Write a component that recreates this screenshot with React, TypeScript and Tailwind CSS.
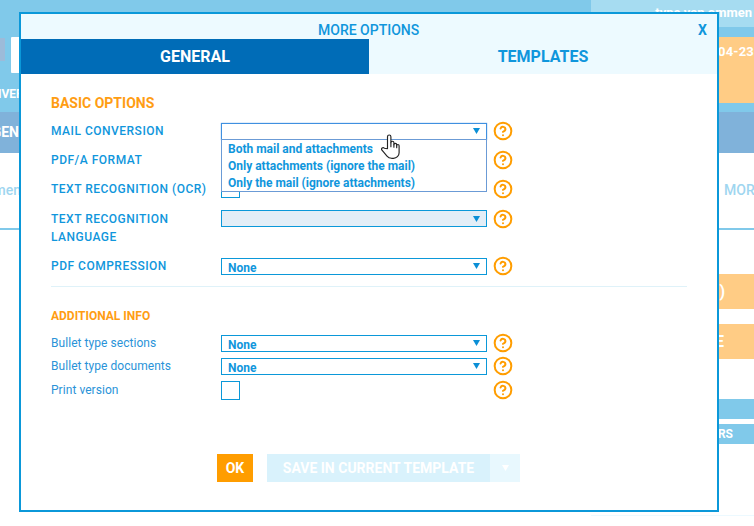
import { CircleHelp } from "lucide-react";

const text = "text-[#1096dc]";

function Arrow({ color = "#0b8fd6" }: { color?: string }) {
  return (
    <svg width="7" height="6" viewBox="0 0 7 6" className="shrink-0">
      <polygon points="0,0 7,0 3.5,6" fill={color} />
    </svg>
  );
}

function Help() {
  return <CircleHelp size={20} strokeWidth={2.4} color="#ff9d00" className="-my-[1px] ml-[6px] shrink-0" />;
}

function Hand() {
  return (
    <svg width="19" height="25" viewBox="0 -0.7 19 25" className="absolute left-[330px] top-[12px] z-20" fill="#ffffff" stroke="#222222" strokeWidth="1.15" strokeLinejoin="round" strokeLinecap="round">
      <path d="M6.5 14 V2 a1.7 1.7 0 0 1 3.4 0 V8 a1.5 1.5 0 0 1 3 0 v2 a1.4 1.4 0 0 1 2.8 0 v1 a1.2 1.2 0 0 1 2.4 0 V18 a5.6 5.6 0 0 1 -5.6 5.6 h-2 a6 6 0 0 1 -4.5 -2.2 L1 15.5 a1.5 1.5 0 0 1 2.3 -2 Z" />
      <path d="M9.9 8 V12 M12.9 10 V12.5 M15.7 11 V13" fill="none" />
    </svg>
  );
}

function Select({ value = "", className = "bg-white", border = "border-[#0b98d9]" }: { value?: string; className?: string; border?: string }) {
  return (
    <div className={`flex h-[17px] w-[266px] items-center justify-between border px-[6px] text-[12px] font-bold leading-none ${text} ${className} ${border}`}>
      <span className="pt-[3px]">{value}</span>
      <Arrow />
    </div>
  );
}

function Label({ children, upper = true }: { children: React.ReactNode; upper?: boolean }) {
  return (
    <div className={`w-[170px] shrink-0 text-[12px] leading-[18px] ${upper ? "font-medium tracking-[0.5px] text-[#1096dc]" : "font-normal tracking-[0.05px] text-[#2a93d8]"}`}>
      {children}
    </div>
  );
}

function Checkbox() {
  return <div className="h-[19px] w-[19px] border border-[#0b98d9] bg-white" />;
}

function LeftBackground() {
  return (
    <div className="flex w-[100px] shrink-0 flex-col text-white">
      <div className="flex h-[112px] flex-col bg-[#80c9ea]">
        <div className="mt-[37px] flex h-[36px] items-start gap-[6px]">
          <div className="mt-[1px] h-[23px] w-[5px] bg-[#9cbbd9]" />
          <div className="h-[36px] w-[20px] rounded-[1px] bg-white" />
        </div>
        <div className="-ml-[2px] mt-[13px] text-[12px] font-bold leading-[16px]">IVERT</div>
      </div>
      <div className="flex h-[41px] items-center justify-end overflow-hidden whitespace-nowrap bg-[#80b2da] pr-[81px] text-[14px] font-bold">GEN</div>
      <div className="flex h-[75px] items-center justify-end overflow-hidden whitespace-nowrap bg-white pr-[79px] text-[14px] font-medium text-[#9fd6f0]">ommen</div>
      <div className="h-[2px] bg-[#80c9ea]" />
    </div>
  );
}

function RightBackground() {
  return (
    <div className="flex h-full w-[163px] shrink-0 flex-col text-white">
      <div className="flex h-[27px] justify-end overflow-hidden whitespace-nowrap bg-[#a6dcf1] pr-[2px] text-[13px] font-bold leading-[25px]">type van ommen</div>
      <div className="h-[10px] bg-[#80c9ea]" />
      <div className="flex h-[66px] justify-end overflow-hidden bg-[#ffcc85] pt-[6px] text-[13px] font-bold leading-[18px] tracking-[0.2px]">04-23</div>
      <div className="h-[9px] bg-[#80c9ea]" />
      <div className="h-[41px] bg-[#80b2da]" />
      <div className="flex h-[75px] items-center bg-white pl-[133px] text-[14px] font-medium text-[#9fd6f0]">MORE</div>
      <div className="h-[2px] bg-[#80c9ea]" />
      <div className="mt-[44px] flex h-[35px] items-center justify-end bg-[#ffcc85] pr-[29px] text-[16px] font-bold">)</div>
      <div className="mt-[15px] flex h-[35px] items-center justify-end bg-[#ffcc85] pr-[30px] text-[16px] font-bold">E</div>
      <div className="mt-[40px] h-[20px] bg-[#80c9ea]" />
      <div className="mt-[5px] flex h-[20px] items-center justify-end bg-[#80c9ea] pr-[21px] text-[12px] font-bold">RS</div>
      <div className="mt-[71px] h-[1px] bg-[#ecf9ff]" />
    </div>
  );
}

export default function App() {
  return (
    <div className="relative flex h-[526px] w-[754px] justify-between overflow-hidden bg-white font-['Roboto',sans-serif]">
      <LeftBackground />
      <div className="h-[112px] flex-1 bg-[#80c9ea]" />
      <RightBackground />

      <div className="absolute left-[19px] top-[12px] flex h-[500px] w-[700px] flex-col border-2 border-[#0b98d9] bg-white">
        <div className="flex h-[25px] shrink-0 items-center justify-between bg-[#edfaff] pl-[297px] pr-[10px] pt-[7px] text-[14px] font-medium leading-none text-[#1096dc]">
          <span>MORE OPTIONS</span>
          <span className="text-[14px] font-bold">X</span>
        </div>
        <div className="flex h-[35px] shrink-0 text-[16px] font-bold leading-none">
          <div className="flex w-[348px] items-center justify-center bg-[#006cb7] text-white">GENERAL</div>
          <div className="flex flex-1 items-center justify-center bg-[#edfaff] text-[#1096dc]">TEMPLATES</div>
        </div>

        <div className="flex flex-1 flex-col pl-[30px]">
          <div className="mt-[20px] text-[14px] font-bold leading-[18px] text-[#ff9d13]">BASIC OPTIONS</div>

          <div className="relative mt-[10px] flex items-center">
            <Label>MAIL CONVERSION</Label>
            <Select border="border-[#3f90e0] shadow-[0_0_1px_#5b9ae0]" />
            <Help />
            <div className="absolute left-[170px] top-[17px] z-10 h-[53px] w-[266px] border border-[#6b9bd6] bg-white pl-[6px] pt-[1px] text-[12px] font-bold leading-[17px] text-[#1096dc]">
              <div>Both mail and attachments</div>
              <div>Only attachments (ignore the mail)</div>
              <div>Only the mail (ignore attachments)</div>
            </div>
            <Hand />
          </div>

          <div className="mt-[11px] flex items-center">
            <Label>PDF/A FORMAT</Label>
            <div className="h-[17px] w-[266px]" />
            <Help />
          </div>

          <div className="mt-[10px] flex items-center">
            <Label>TEXT RECOGNITION (OCR)</Label>
            <div className="w-[266px]"><Checkbox /></div>
            <Help />
          </div>

          <div className="mt-[12px] flex items-start">
            <Label>TEXT RECOGNITION LANGUAGE</Label>
            <Select className="bg-[#e3eef7]" />
            <Help />
          </div>

          <div className="mt-[11px] flex items-center">
            <Label>PDF COMPRESSION</Label>
            <Select value="None" />
            <Help />
          </div>

          <div className="mt-[11px] h-[1px] w-[636px] bg-[#dff2f9]" />

          <div className="mt-[22px] text-[12px] font-bold leading-[14px] text-[#ff9d13]">ADDITIONAL INFO</div>

          <div className="mt-[11px] flex items-center">
            <Label upper={false}>Bullet type sections</Label>
            <Select value="None" />
            <Help />
          </div>
          <div className="mt-[5px] flex items-center">
            <Label upper={false}>Bullet type documents</Label>
            <Select value="None" />
            <Help />
          </div>
          <div className="mt-[6px] flex items-start">
            <Label upper={false}>Print version</Label>
            <div className="w-[266px]"><Checkbox /></div>
            <Help />
          </div>

          <div className="ml-[166px] mt-[54px] flex h-[28px] text-[14px] font-bold leading-none text-white">
            <div className="flex w-[36px] items-center justify-center bg-[#ff9d00]">OK</div>
            <div className="ml-[14px] flex w-[223px] items-center justify-center bg-[#d9f2fc]">SAVE IN CURRENT TEMPLATE</div>
            <div className="flex w-[30px] items-center justify-center bg-[#e8f8fe]"><Arrow color="#ffffff" /></div>
          </div>
        </div>
      </div>
    </div>
  );
}
